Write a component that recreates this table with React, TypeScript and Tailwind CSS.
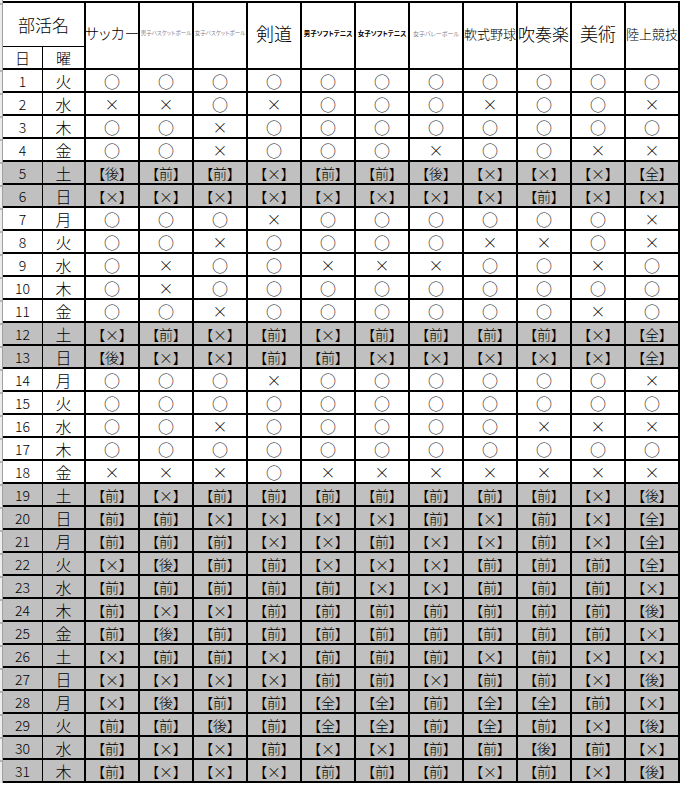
import React from 'react';

const clubs: { name: string; cls: string }[] = [
  { name: 'サッカー', cls: 'justify-center text-[15px]' },
  { name: '男子バスケットボール', cls: 'justify-center text-[5.5px] font-normal text-[#7c7c8c]' },
  { name: '女子バスケットボール', cls: 'justify-center text-[5.5px] font-normal text-[#7c7c8c]' },
  { name: '剣道', cls: 'justify-center text-[18px]' },
  { name: '男子ソフトテニス', cls: 'justify-center text-[6.5px] font-bold' },
  { name: '女子ソフトテニス', cls: 'justify-center text-[6.5px] font-bold' },
  { name: '女子バレーボール', cls: 'justify-center text-[6px] font-normal text-[#7c7c8c]' },
  { name: '軟式野球', cls: 'justify-center text-[13px]' },
  { name: '吹奏楽', cls: 'justify-start text-[17px]' },
  { name: '美術', cls: 'justify-center text-[18px]' },
  { name: '陸上競技', cls: 'justify-center text-[13px]' },
];

// o = ○, x = ×, 前/後/全/× in brackets on weekend rows
const rows: [string, string][] = [
  ['火', 'o o o o o o o o o o o'],
  ['水', 'x x o x o o o x o o x'],
  ['木', 'o o x o o o o o o o o'],
  ['金', 'o o x o o o x o o x x'],
  ['土', '後 前 前 × 前 前 後 × × × 全'],
  ['日', '× × × × × × × × 前 × ×'],
  ['月', 'o o o x o o o o o o x'],
  ['火', 'o o x o o o o x x o x'],
  ['水', 'o x o o x x x o o x o'],
  ['木', 'o x o o o o o o o o o'],
  ['金', 'o o x o o o o o o x o'],
  ['土', '× 前 × 前 × 前 前 前 前 × 全'],
  ['日', '後 × × 前 前 × × × × × 全'],
  ['月', 'o o o x o o o o o o x'],
  ['火', 'o o o o o o o o o o o'],
  ['水', 'o o x o o o o o x x x'],
  ['木', 'o o o o o o o o o o o'],
  ['金', 'x x x o x x x x x x x'],
  ['土', '前 × 前 前 前 前 前 前 前 × 後'],
  ['日', '前 前 × × × × 前 × 前 × 全'],
  ['月', '前 前 前 × × 前 × × 前 × 全'],
  ['火', '× 後 前 前 × × × 前 前 前 全'],
  ['水', '前 前 前 前 前 × × 前 前 前 ×'],
  ['木', '前 × × 前 前 前 前 前 前 前 後'],
  ['金', '前 後 前 前 前 前 前 前 前 前 ×'],
  ['土', '× 前 前 × 前 前 前 × 前 × ×'],
  ['日', '× × × × 前 前 × 前 前 × 後'],
  ['月', '× 後 前 前 全 全 前 全 全 前 ×'],
  ['火', '前 前 後 前 全 全 前 全 前 × 後'],
  ['水', '前 × × 前 × × 前 前 後 前 ×'],
  ['木', '前 × × × 前 前 前 × 前 × 後'],
];

const font = "font-['Noto_Sans_CJK_JP',sans-serif] font-light text-black";

function Mark({ v }: { v: string }) {
  if (v === 'o') return <span className="text-[16px] leading-none">○</span>;
  if (v === 'x') return <span className="text-[15px] leading-none">×</span>;
  return <span className="text-[14px] leading-none [font-feature-settings:'palt']">【{v}】</span>;
}

export default function App() {
  return (
    <div className={`flex w-[681px] h-[785px] bg-white ${font}`}>
      {/* spreadsheet row-header edge */}
      <div className="w-[3px] h-[783px] grid grid-rows-[3px_65px_repeat(31,21px)] gap-[2px] bg-[#b4b4b4] border-r border-[#a0a0a0]">
        <div className="bg-[#ececec]" />
        <div className="bg-[#ececec]" />
        {rows.map((_, i) => (
          <div key={i} className="bg-[#ececec]" />
        ))}
      </div>

      <div className="mt-[1px] self-start grid grid-cols-[81px_repeat(11,52px)] grid-rows-[65px_repeat(31,21px)] gap-[2px] bg-black pt-[2px] pr-[2px] pb-[2px]">
        {/* header */}
        <div className="flex flex-col gap-[1px] bg-black">
          <div className="h-[43px] bg-white flex items-center justify-center text-[17px]">部活名</div>
          <div className="h-[21px] grid grid-cols-[39px_41px] gap-[1px] bg-black">
            <div className="bg-white flex items-center justify-center text-[15px] leading-none">日</div>
            <div className="bg-white flex items-center justify-center text-[15px] leading-none">曜</div>
          </div>
        </div>
        {clubs.map((c) => (
          <div
            key={c.name}
            className={`bg-white flex items-center overflow-hidden whitespace-nowrap pb-[4px] [font-feature-settings:'palt'] ${c.cls}`}
          >
            {c.name}
          </div>
        ))}

        {/* days */}
        {rows.map(([wd, marks], i) => {
          const weekend = wd === '土' || wd === '日' || (!marks.includes('o') && !marks.includes('x'));
          const bg = weekend ? 'bg-[#c0c0c0]' : 'bg-white';
          return (
            <React.Fragment key={i}>
              <div className="grid grid-cols-[39px_41px] gap-[1px] bg-black">
                <div className={`${bg} flex items-center justify-center text-[14px] leading-none`}>{i + 1}</div>
                <div className={`${bg} flex items-center justify-center text-[16px] leading-none`}>{wd}</div>
              </div>
              {marks.split(' ').map((m, j) => (
                <div key={j} className={`${bg} flex items-center justify-center`}>
                  <Mark v={m} />
                </div>
              ))}
            </React.Fragment>
          );
        })}
      </div>
    </div>
  );
}
